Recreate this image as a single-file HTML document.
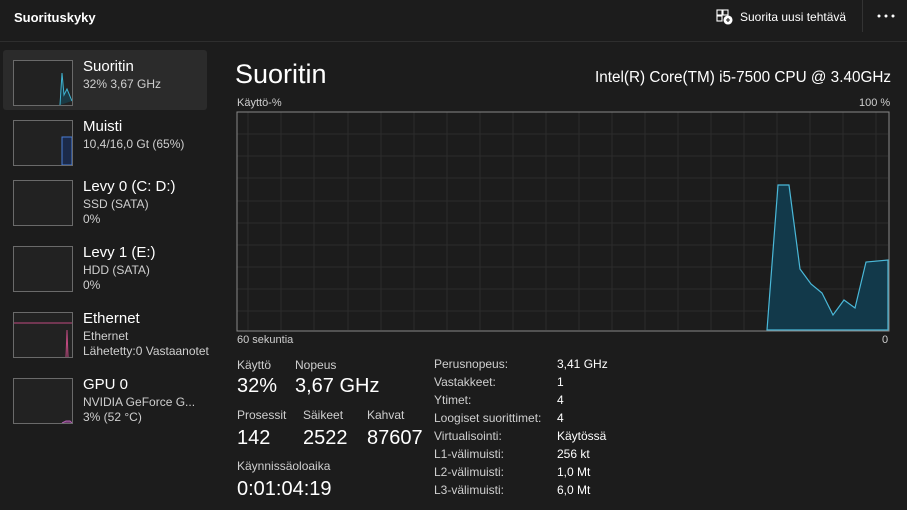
<!DOCTYPE html>
<html><head><meta charset="utf-8"><style>
*{margin:0;padding:0;box-sizing:border-box}
body{width:907px;height:510px;background:#1c1c1c;color:#fff;font-family:"Liberation Sans",sans-serif;position:relative;overflow:hidden}
.a{position:absolute;white-space:nowrap}
.thumb{position:absolute;left:13px;width:60px;height:46px;border:1px solid #6a6a6a;background:#222}
.t1{font-size:15px;color:#fff}
.t2{font-size:12px;color:#cfcfcf}
.lbl{font-size:12px;color:#cfcfcf}
.big{font-size:20px;color:#fff}
</style></head><body>
<div class="a" style="left:14px;top:10px;font-size:13px;font-weight:bold">Suorituskyky</div>
<svg class="a" style="left:716px;top:9px" width="18" height="16" viewBox="0 0 18 16" fill="none" stroke="#fff" stroke-width="1.1"><rect x="1" y="1" width="5" height="5"/><rect x="7" y="1" width="5" height="5"/><rect x="1" y="7" width="5" height="5"/><circle cx="12" cy="11" r="4" fill="#fff"/><path d="M12 9v4M10 11h4" stroke="#1c1c1c"/></svg>
<div class="a" style="left:740px;top:10px;font-size:12px">Suorita uusi tehtävä</div>
<div class="a" style="left:862px;top:0;width:1px;height:32px;background:#333"></div>
<svg class="a" style="left:877px;top:14px" width="18" height="4"><circle cx="2" cy="2" r="1.5" fill="#fff"/><circle cx="9" cy="2" r="1.5" fill="#fff"/><circle cx="16" cy="2" r="1.5" fill="#fff"/></svg>
<div class="a" style="left:0;top:41px;width:907px;height:1px;background:#2e2e2e"></div>

<div class="a" style="left:3px;top:50px;width:204px;height:60px;background:#2b2b2b;border-radius:3px"></div>
<div class="thumb" style="top:60px"><svg width="58" height="44"><polyline points="46,44 48,12 50,34 53,28 58,40" fill="#1a3a44" stroke="#3fb3d0" stroke-width="1"/></svg></div>
<div class="a t1" style="left:83px;top:58px">Suoritin</div>
<div class="a t2" style="left:83px;top:77px">32% 3,67 GHz</div>

<div class="thumb" style="top:120px"><svg width="58" height="44"><rect x="48" y="16" width="10" height="28" fill="#1b2a4a" stroke="#4a7ed8"/></svg></div>
<div class="a t1" style="left:83px;top:118px">Muisti</div>
<div class="a t2" style="left:83px;top:137px">10,4/16,0 Gt (65%)</div>

<div class="thumb" style="top:180px"></div>
<div class="a t1" style="left:83px;top:178px">Levy 0 (C: D:)</div>
<div class="a t2" style="left:83px;top:197px">SSD (SATA)</div>
<div class="a t2" style="left:83px;top:212px">0%</div>

<div class="thumb" style="top:246px"></div>
<div class="a t1" style="left:83px;top:244px">Levy 1 (E:)</div>
<div class="a t2" style="left:83px;top:263px">HDD (SATA)</div>
<div class="a t2" style="left:83px;top:278px">0%</div>

<div class="thumb" style="top:312px"><svg width="58" height="44"><line x1="0" y1="10" x2="58" y2="10" stroke="#c04a80"/><polyline points="52,44 53,17 54,44" fill="none" stroke="#c04a80"/></svg></div>
<div class="a t1" style="left:83px;top:310px">Ethernet</div>
<div class="a t2" style="left:83px;top:329px">Ethernet</div>
<div class="a t2" style="left:83px;top:344px">Lähetetty:0 Vastaanotet</div>

<div class="thumb" style="top:378px"><svg width="58" height="44"><polyline points="48,44 52,42 56,42 58,44" fill="#6a3a6a" stroke="#b060b0"/></svg></div>
<div class="a t1" style="left:83px;top:376px">GPU 0</div>
<div class="a t2" style="left:83px;top:395px">NVIDIA GeForce G...</div>
<div class="a t2" style="left:83px;top:410px">3% (52 °C)</div>

<div class="a" style="left:235px;top:59px;font-size:27px">Suoritin</div>
<div class="a" style="left:595px;top:69px;font-size:15.3px">Intel(R) Core(TM) i5-7500 CPU @ 3.40GHz</div>
<div class="a lbl" style="left:237px;top:97px;font-size:11px">Käyttö-%</div>
<div class="a lbl" style="left:859px;top:97px;font-size:11px">100 %</div>
<svg class="a" style="left:236px;top:111px" width="654" height="221">
<g stroke="#2c2c2c" stroke-width="1">
<line x1="1" y1="23" x2="652" y2="23"/><line x1="1" y1="45" x2="652" y2="45"/><line x1="1" y1="67" x2="652" y2="67"/><line x1="1" y1="90" x2="652" y2="90"/><line x1="1" y1="112" x2="652" y2="112"/><line x1="1" y1="134" x2="652" y2="134"/><line x1="1" y1="156" x2="652" y2="156"/><line x1="1" y1="178" x2="652" y2="178"/><line x1="1" y1="200" x2="652" y2="200"/>
<line x1="12" y1="1" x2="12" y2="219"/><line x1="45" y1="1" x2="45" y2="219"/><line x1="78" y1="1" x2="78" y2="219"/><line x1="112" y1="1" x2="112" y2="219"/><line x1="145" y1="1" x2="145" y2="219"/><line x1="178" y1="1" x2="178" y2="219"/><line x1="211" y1="1" x2="211" y2="219"/><line x1="244" y1="1" x2="244" y2="219"/><line x1="277" y1="1" x2="277" y2="219"/><line x1="310" y1="1" x2="310" y2="219"/><line x1="343" y1="1" x2="343" y2="219"/><line x1="376" y1="1" x2="376" y2="219"/><line x1="409" y1="1" x2="409" y2="219"/><line x1="442" y1="1" x2="442" y2="219"/><line x1="475" y1="1" x2="475" y2="219"/><line x1="508" y1="1" x2="508" y2="219"/><line x1="541" y1="1" x2="541" y2="219"/><line x1="574" y1="1" x2="574" y2="219"/><line x1="607" y1="1" x2="607" y2="219"/><line x1="640" y1="1" x2="640" y2="219"/>
</g>
<polygon points="531,219 542,74 553,74 564,158 575,173 586,182 597,204 608,189 619,197 630,151 652,149 652,219" fill="#12394a" stroke="#4ab8d8" stroke-width="1.2"/>
<rect x="1" y="1" width="652" height="219" fill="none" stroke="#888"/>
</svg>
<div class="a lbl" style="left:237px;top:334px;font-size:11px">60 sekuntia</div>
<div class="a lbl" style="left:882px;top:334px;font-size:11px">0</div>

<div class="a lbl" style="left:237px;top:358px">Käyttö</div>
<div class="a lbl" style="left:295px;top:358px">Nopeus</div>
<div class="a big" style="left:237px;top:375px">32%</div>
<div class="a big" style="left:295px;top:375px">3,67 GHz</div>
<div class="a lbl" style="left:237px;top:408px">Prosessit</div>
<div class="a lbl" style="left:303px;top:408px">Säikeet</div>
<div class="a lbl" style="left:367px;top:408px">Kahvat</div>
<div class="a big" style="left:237px;top:427px">142</div>
<div class="a big" style="left:303px;top:427px">2522</div>
<div class="a big" style="left:367px;top:427px">87607</div>
<div class="a lbl" style="left:237px;top:459px">Käynnissäoloaika</div>
<div class="a big" style="left:237px;top:478px">0:01:04:19</div>

<div class="a lbl" style="left:434px;top:355px;line-height:18px">Perusnopeus:<br>Vastakkeet:<br>Ytimet:<br>Loogiset suorittimet:<br>Virtualisointi:<br>L1-välimuisti:<br>L2-välimuisti:<br>L3-välimuisti:</div>
<div class="a" style="left:557px;top:355px;font-size:12px;line-height:18px">3,41 GHz<br>1<br>4<br>4<br>Käytössä<br>256 kt<br>1,0 Mt<br>6,0 Mt</div>
</body></html>
